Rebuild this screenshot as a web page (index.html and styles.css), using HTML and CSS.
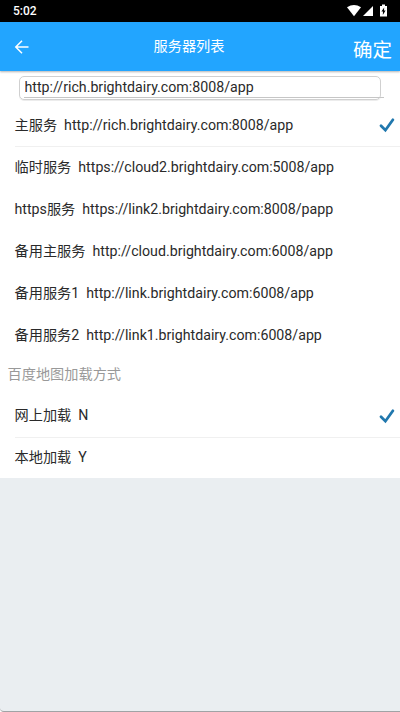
FILE: index.html
```html
<!DOCTYPE html>
<html lang="zh-CN">
<head>
    <meta charset="UTF-8">
    <meta name="viewport" content="width=device-width, initial-scale=1.0">
    <title>服务器列表</title>
    <link rel="stylesheet" href="styles.css">
</head>
<body>
    <div class="status-bar">
        <span class="time">5:02</span>
        <svg class="status-icons" width="42" height="14" viewBox="0 0 42 14">
            <path d="M0 3.2 Q7 -1.4 14 3.2 L7 12.2 Z" fill="#fff"/>
            <path d="M26 2 V12 H16 Z" fill="#fff"/>
            <path d="M35 0.6 h3 v1.4 h2 v10.4 h-7 V2 h2 Z" fill="#fff"/>
            <path d="M37.2 3.4 L34.4 7.6 H36 L35.8 11 L38.6 6.6 H37 Z" fill="#000"/>
        </svg>
    </div>

    <div class="header">
        <svg class="back" width="16" height="16" viewBox="0 0 16 16">
            <path d="M14.5 8 H2 M8 1.8 L1.8 8 L8 14.2" fill="none" stroke="#fff" stroke-width="1.5"/>
        </svg>
        <h1>服务器列表</h1>
        <span class="confirm">确定</span>
    </div>

    <div class="input-area">
        <div class="input-box">
            <input type="text" id="serverUrl" value="http://rich.brightdairy.com:8008/app">
            <div class="underline"></div>
        </div>
    </div>

    <div class="list">
        <div class="row">
            <span>主服务&nbsp; http://rich.brightdairy.com:8008/app</span>
            <svg class="check" width="16" height="16" viewBox="0 0 16 16">
                <path d="M2 8.8 L6.4 13.2 L13.9 2.8" fill="none" stroke="#2178ae" stroke-width="2.8" stroke-linecap="round"/>
            </svg>
        </div>
        <div class="row divided"><span>临时服务&nbsp; https://cloud2.brightdairy.com:5008/app</span></div>
        <div class="row"><span>https服务&nbsp; https://link2.brightdairy.com:8008/papp</span></div>
        <div class="row"><span>备用主服务&nbsp; http://cloud.brightdairy.com:6008/app</span></div>
        <div class="row"><span>备用服务1&nbsp; http://link.brightdairy.com:6008/app</span></div>
        <div class="row"><span>备用服务2&nbsp; http://link1.brightdairy.com:6008/app</span></div>
    </div>

    <div class="section-title">百度地图加载方式</div>

    <div class="list map-list">
        <div class="row">
            <span>网上加载&nbsp; N</span>
            <svg class="check" width="16" height="16" viewBox="0 0 16 16">
                <path d="M2 8.8 L6.4 13.2 L13.9 2.8" fill="none" stroke="#2178ae" stroke-width="2.8" stroke-linecap="round"/>
            </svg>
        </div>
        <div class="row divided last"><span>本地加载&nbsp; Y</span></div>
    </div>

    <div class="bottom"></div>
</body>
</html>
```
FILE: styles.css
```css
* {
    box-sizing: border-box;
}
body {
    margin: 0;
    height: 712px;
    display: flex;
    flex-direction: column;
    overflow: hidden;
    background-color: #fff;
    color: #2a2a2a;
    font-family: Roboto, "Noto Sans CJK SC", sans-serif;
    font-size: 14.2px;
}
.status-bar {
    height: 22px;
    flex: none;
    display: flex;
    justify-content: space-between;
    align-items: center;
    padding: 0 11px 0 13px;
    background-color: #000;
    color: #fff;
}
.time {
    font-size: 12px;
    font-weight: 500;
}
.status-icons {
    margin-top: -1px;
}
.header {
    height: 49px;
    flex: none;
    display: grid;
    grid-template-columns: 100px 1fr 100px;
    align-items: center;
    padding: 0 8px 0 14px;
    background-color: #22a5ff;
    color: #fff;
    box-shadow: 0 1px 2px rgba(0,0,0,0.3);
}
.header h1 {
    margin: 0;
    padding-right: 28px;
    padding-bottom: 4px;
    text-align: center;
    font-size: 14.2px;
    font-weight: 400;
}
.confirm {
    text-align: right;
    font-size: 19.5px;
    padding-top: 4px;
}
.input-area {
    height: 33px;
    flex: none;
    padding: 5px 19px 0 19px;
}
.input-box {
    height: 24px;
    border: 1px solid #d0d0d0;
    border-radius: 5px;
    box-shadow: 0 1px 0 #ececec;
}
.input-box input {
    display: block;
    width: 100%;
    height: 20px;
    padding: 0 0 0 4.5px;
    border: none;
    outline: none;
    background: none;
    color: #2a2a2a;
    font: inherit;
}
.underline {
    height: 1px;
    margin: 0 -4px 0 4px;
    background-color: #c6c6c6;
}
.row {
    height: 42px;
    margin-left: 15px;
    padding-right: 5px;
    display: flex;
    align-items: center;
    justify-content: space-between;
    white-space: nowrap;
}
.row span {
    margin-left: -0.5px;
    padding-bottom: 2px;
}
.divided {
    border-top: 1px solid #f0f0f0;
}
.divided span {
    padding-bottom: 3px;
}
.map-list span {
    padding-bottom: 4px;
}
.last {
    height: 41px;
}
.section-title {
    height: 39px;
    flex: none;
    padding-left: 7.5px;
    line-height: 37px;
    color: #999;
}
.bottom {
    flex: 1;
    background-color: #eaeef1;
    border-bottom: 1px solid #a0a3a5;
    border-bottom-left-radius: 4px;
}
```
